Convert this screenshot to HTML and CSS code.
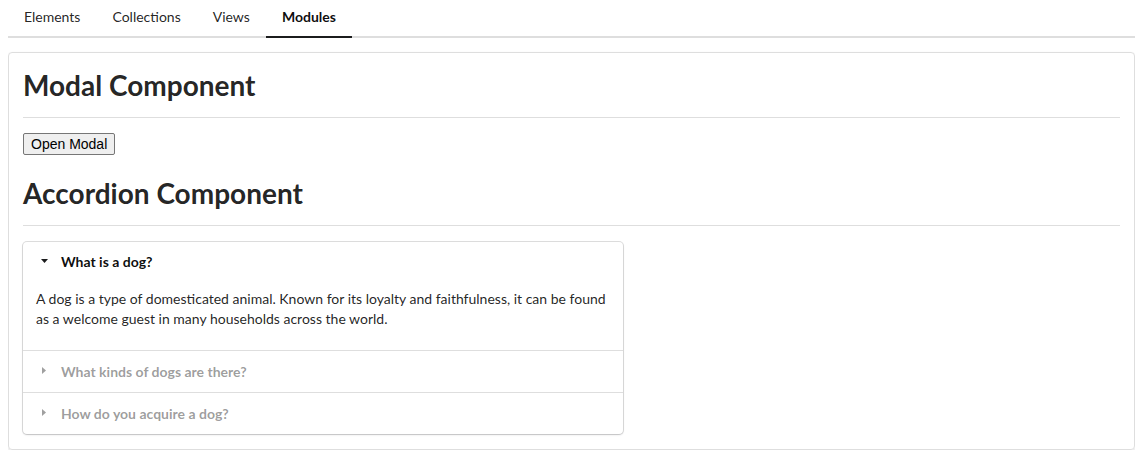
FILE: index.html
```html
<!DOCTYPE html>
<html>
<head>
<meta charset="utf-8">
<link rel="stylesheet" href="styles.css">
</head>
<body>
<nav class="tabs">
  <a class="tab">Elements</a>
  <a class="tab">Collections</a>
  <a class="tab">Views</a>
  <a class="tab active">Modules</a>
</nav>
<section class="segment">
  <h1 class="title">Modal Component</h1>
  <hr class="divider">
  <div class="btn-row"><button class="btn">Open Modal</button></div>
  <h1 class="title second">Accordion Component</h1>
  <hr class="divider last">
  <div class="accordion">
    <div class="acc-title active">
      <svg class="caret-down" width="7" height="4" viewBox="0 0 7 4"><polygon points="0,0 7,0 3.5,4" fill="#1b1c1d"/></svg>
      <span>What is a dog?</span>
    </div>
    <div class="acc-content">
      <p>A dog is a type of domesticated animal. Known for its loyalty and faithfulness, it can be found as a welcome guest in many households across the world.</p>
    </div>
    <div class="acc-title bordered">
      <svg class="caret-right" width="4" height="7" viewBox="0 0 4 7"><polygon points="0,0 4,3.5 0,7" fill="#a0a0a0"/></svg>
      <span>What kinds of dogs are there?</span>
    </div>
    <div class="acc-title bordered">
      <svg class="caret-right" width="4" height="7" viewBox="0 0 4 7"><polygon points="0,0 4,3.5 0,7" fill="#a0a0a0"/></svg>
      <span>How do you acquire a dog?</span>
    </div>
  </div>
</section>
</body>
</html>
```

FILE: styles.css
```css
html, body {
  background: #ffffff;
}
body {
  margin: 0 11px 0 8px;
  font-family: Lato, "Noto Sans", sans-serif;
  font-size: 14px;
  line-height: 20px;
  color: rgba(0, 0, 0, 0.87);
}
.tabs {
  display: flex;
  border-bottom: 2px solid #dedede;
}
.tab {
  display: block;
  padding: 10px 16px 12px;
  line-height: 14px;
  font-size: 14px;
  color: rgba(0, 0, 0, 0.87);
  border-bottom: 2px solid transparent;
  margin-bottom: -2px;
  cursor: pointer;
}
.tab.active {
  font-weight: 700;
  color: rgba(0, 0, 0, 0.95);
  border-bottom-color: #1b1c1d;
}
.segment {
  margin-top: 14px;
  padding: 14px 14px 15px;
  border: 1px solid #dedede;
  border-radius: 4px;
  box-shadow: 0 1px 2px 0 rgba(34, 36, 38, 0.15);
}
.title {
  margin: 0 0 14px;
  font-size: 28px;
  line-height: 36px;
  font-weight: 700;
  color: rgba(0, 0, 0, 0.87);
}
.title.second {
  margin-top: 21px;
}
.divider {
  margin: 0 0 14px;
  height: 0;
  border: 0;
  border-top: 1px solid #dedede;
  border-bottom: 1px solid #ffffff;
}
.divider.last {
  margin-bottom: 15px;
}
.btn-row {
  height: 21px;
}
.btn {
  font-family: "Liberation Sans", Arial, sans-serif;
  font-size: 14px;
  line-height: normal;
  padding: 1px 7px;
  height: 22px;
  border: 1px solid #767676;
  border-radius: 2px;
  background: #efefef;
  color: #000;
  margin: 0;
  vertical-align: top;
}
.accordion {
  width: 600px;
  border-radius: 4px;
  box-shadow: 0 1px 2px 0 rgba(34, 36, 38, 0.15), 0 0 0 1px #dedede;
}
.acc-title {
  display: flex;
  align-items: center;
  padding: 10px 14px 11px;
  line-height: 20px;
  font-weight: 700;
  color: rgba(0, 0, 0, 0.4);
}
.acc-title.active {
  color: rgba(0, 0, 0, 0.95);
}
.acc-title.bordered {
  border-top: 1px solid #dedede;
  padding: 11px 14px 10px;
}
.caret-down {
  display: block;
  margin: -3px 13px 0 4px;
}
.caret-right {
  display: block;
  margin: -3px 15px 0 5px;
}
.acc-content {
  padding: 6px 14px 21px 13px;
}
.acc-content p {
  margin: 0;
  line-height: 20px;
  color: rgba(0, 0, 0, 0.87);
}
```
